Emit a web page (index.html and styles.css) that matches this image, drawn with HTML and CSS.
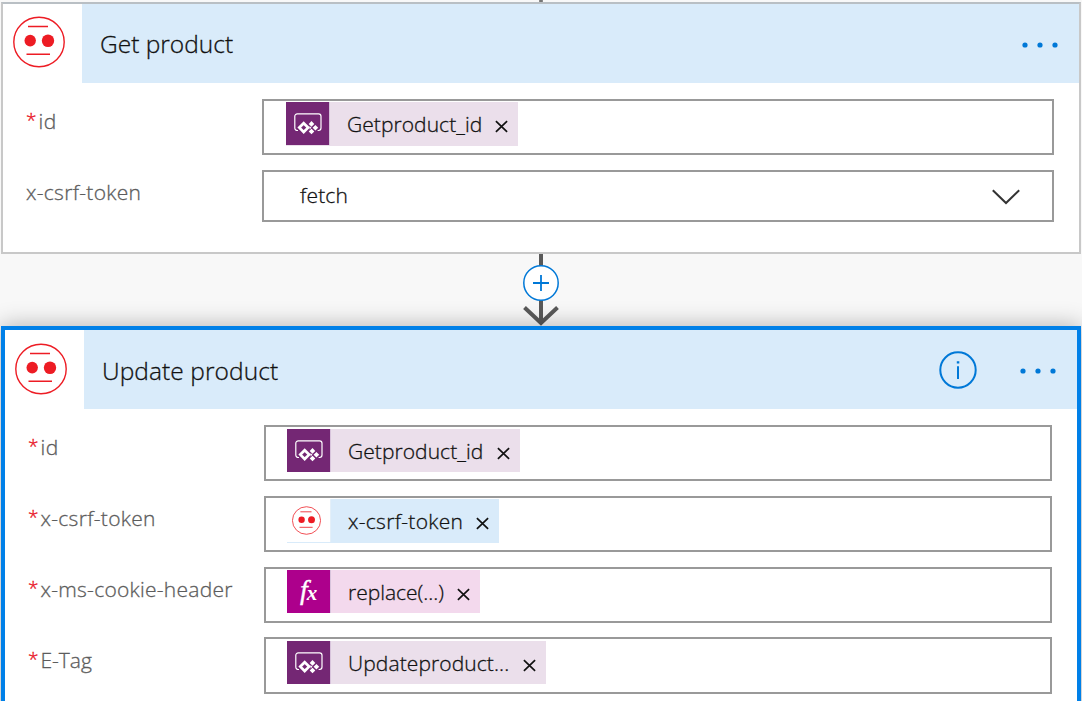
FILE: index.html
```html
<!DOCTYPE html>
<html lang="en">
<head>
<meta charset="utf-8">
<title>Flow designer</title>
<link rel="stylesheet" href="styles.css">
</head>
<body>
<svg class="defs" aria-hidden="true">
  <symbol id="face" viewBox="0 0 52 52">
    <ellipse cx="26" cy="26" rx="25.2" ry="24.7" fill="none" stroke="#ed1c24" stroke-width="1.4"/>
    <path d="M15 10.400h20M13.500 38.200h23.500" stroke="#ed1c24" stroke-width="1.500"/>
    <ellipse cx="17.2" cy="24.6" rx="5.7" ry="5.8" fill="#ed1c24"/>
    <ellipse cx="35" cy="24.8" rx="6.2" ry="6.3" fill="#ed1c24"/>
  </symbol>
  <symbol id="app" viewBox="0 0 43 43">
    <path d="M12 28.500h-.8a2.400 2.400 0 0 1-2.400-2.400V14.300a2.400 2.400 0 0 1 2.400-2.400h21.400a2.400 2.400 0 0 1 2.400 2.400v11.800a2.400 2.400 0 0 1-2.400 2.400h-1" fill="none" stroke="#fff" stroke-width="1.200"/>
    <path d="M17.700 21.200l4.400 4.400-4.400 4.400-4.400-4.400z" fill="none" stroke="#fff" stroke-width="2.700"/>
    <path d="M25.500 19.100l2.800 2.800-2.800 2.800-2.800-2.800zM29.400 22.900l2.800 2.800-2.800 2.800-2.800-2.800zM25.500 26.700l2.800 2.800-2.800 2.800-2.800-2.800zM23.600 23.900l1.800 1.800-1.800 1.800z" fill="#fff"/>
  </symbol>
  <symbol id="dots" viewBox="0 0 36 6">
    <circle cx="3" cy="3" r="2.6"/><circle cx="18" cy="3" r="2.6"/><circle cx="33" cy="3" r="2.6"/>
  </symbol>
  <symbol id="close" viewBox="0 0 13 13">
    <path d="M.9 1.2l11.2 10.6M12.1 1.2L.9 11.8" fill="none" stroke="#111" stroke-width="1.7"/>
  </symbol>
</svg>
<main class="canvas">
  <div class="incoming"></div>
  <section class="card">
    <header class="head">
      <div class="logo"><svg class="face"><use href="#face"/></svg></div>
      <h2 class="title title-get">Get product</h2>
      <svg class="dots"><use href="#dots"/></svg>
    </header>
    <div class="fields">
      <div class="row">
        <div class="label"><span class="req">*</span><span class="t-id">id</span></div>
        <div class="box">
          <div class="token app w-get"><span class="icon"><svg><use href="#app"/></svg></span><span class="name t-get">Getproduct_id</span><svg class="close"><use href="#close"/></svg></div>
        </div>
      </div>
      <div class="row">
        <div class="label"><span class="t-csrf">x-csrf-token</span></div>
        <div class="box select"><span class="t-fetch">fetch</span>
          <svg class="chevron" viewBox="0 0 28 16"><path d="M.8 1.2L14 14 27.2 1.2" fill="none" stroke="#333" stroke-width="2"/></svg>
        </div>
      </div>
    </div>
  </section>
  <div class="connector">
    <svg class="arrow" viewBox="0 0 40 72">
      <path d="M20 0v68M3.500 53.500L20 69 36.500 53.500" fill="none" stroke="#595959" stroke-width="4"/>
      <circle cx="20" cy="29" r="17.200" fill="#fff" stroke="#0078d7" stroke-width="1.500"/>
      <path d="M12 29h16M20 21v16" stroke="#0078d7" stroke-width="1.800"/>
    </svg>
  </div>
  <section class="card selected">
    <header class="head">
      <div class="logo"><svg class="face"><use href="#face"/></svg></div>
      <h2 class="title title-update">Update product</h2>
      <svg class="info" viewBox="0 0 38 38"><circle cx="19" cy="19" r="17.700" fill="none" stroke="#0078d7" stroke-width="2"/><path d="M17.800 10.300h2.500v2.300h-2.500zM18 15.300h2V28h-2z" fill="#0078d7"/></svg>
      <svg class="dots"><use href="#dots"/></svg>
    </header>
    <div class="fields">
      <div class="row">
        <div class="label"><span class="req">*</span><span class="t-id">id</span></div>
        <div class="box">
          <div class="token app w-get"><span class="icon"><svg><use href="#app"/></svg></span><span class="name t-get">Getproduct_id</span><svg class="close"><use href="#close"/></svg></div>
        </div>
      </div>
      <div class="row">
        <div class="label"><span class="req">*</span><span class="t-csrf">x-csrf-token</span></div>
        <div class="box high">
          <div class="token custom w-csrf"><span class="icon"><svg class="mini"><use href="#face"/></svg></span><span class="name t-csrf">x-csrf-token</span><svg class="close"><use href="#close"/></svg></div>
        </div>
      </div>
      <div class="row">
        <div class="label"><span class="req">*</span><span class="t-cookie">x-ms-cookie-header</span></div>
        <div class="box high">
          <div class="token expr w-replace"><span class="icon fx">f<span class="sub">x</span></span><span class="name t-replace">replace(...)</span><svg class="close"><use href="#close"/></svg></div>
        </div>
      </div>
      <div class="row">
        <div class="label"><span class="req">*</span><span class="t-etag">E-Tag</span></div>
        <div class="box last">
          <div class="token app w-update"><span class="icon"><svg><use href="#app"/></svg></span><span class="name t-update">Updateproduct...</span><svg class="close"><use href="#close"/></svg></div>
        </div>
      </div>
    </div>
  </section>
</main>
</body>
</html>
```
FILE: styles.css
```css
* { box-sizing: border-box; }
body { margin: 0; background: #f8f8f8; font-family: "Open Sans", "Noto Sans", sans-serif; font-size: 21px; font-weight: 300; color: #111; -webkit-text-stroke: .3px currentColor; }
svg { display: block; flex: none; }
.defs { position: absolute; width: 0; height: 0; }
.canvas { width: 1082px; height: 701px; overflow: hidden; padding: 0 1px; display: flex; flex-direction: column; }
.incoming { width: 4px; height: 2px; flex: none; margin-left: 538px; background: radial-gradient(#555, #aaa); }
.card { flex: none; width: 1080px; height: 252px; background: #fff; border: 2px solid #c8c8c8; border-top-color: #b9bfc4; }
.head { height: 79px; display: flex; align-items: center; background: #d9ebfa; padding-right: 21px; }
.logo { width: 79px; height: 79px; background: #fff; padding: 12px 0 0 10px; flex: none; }
.face { width: 52px; height: 52px; }
.title { flex: 1; margin: 0 0 0 18px; font-size: 24.500px; font-weight: 300; line-height: 34px; white-space: nowrap; }
.title-update { letter-spacing: .08px; }
.dots { width: 36px; height: 6px; fill: #0078d7; margin-top: 3px; }
.info { width: 38px; height: 38px; margin: 1px 43px 0 0; }
.fields { display: flex; flex-direction: column; gap: 15px; padding: 16px 25px 0 23px; }
.row { display: flex; align-items: flex-start; }
.label { width: 236px; flex: none; color: #5c5c5c; line-height: 30px; padding-top: 7px; white-space: nowrap; display: flex; }
.req { color: #e81123; width: 12.500px; font-size: 19px; line-height: 28px; }
.box { flex: 1; height: 56px; border: 2px solid #999; background: #fff; padding: 1px 0 0 22px; display: flex; }
.select { height: 52px; padding: 0 32px 0 36px; align-items: center; justify-content: space-between; }
.t-fetch { margin-top: -2px; letter-spacing: .15px; }
.chevron { width: 28px; height: 16px; margin-top: 1px; }
.token { height: 44px; display: flex; align-items: center; padding-right: 10px; }
.icon { width: 44px; height: 43px; flex: none; align-self: flex-start; border-right: 1px solid #d8c4dc; }
.icon svg { width: 43px; height: 43px; }
.name { flex: 1; margin-left: 17px; line-height: 30px; white-space: nowrap; }
.close { width: 13px; height: 13px; margin-top: 5px; }
.t-id { letter-spacing: .4px; }
.t-get { letter-spacing: .06px; }
.t-csrf { letter-spacing: .3px; }
.t-cookie { letter-spacing: .27px; }
.t-update { letter-spacing: .1px; }
.app { background: #ebdfeb; }
.app .icon { background: #742774; }
.custom { background: #d9ebfa; }
.custom .icon { background: #fff; border-color: #e4eff8; }
.icon .mini { width: 29px; height: 29px; margin: 7px 0 0 5px; }
.expr { background: #f3d9ed; height: 43px; }
.fx { background: #ad008c; color: #fff; font: italic 400 28px/40px "Liberation Serif", serif; -webkit-text-stroke: .4px #fff; display: flex; padding-left: 13px; }
.sub { font-size: 21px; font-weight: 700; line-height: 46px; margin-left: -1px; -webkit-text-stroke: 0; }
.w-get { width: 232px; }
.w-csrf { width: 212px; }
.w-replace { width: 193px; }
.w-update { width: 259px; }
.selected { height: 420px; border: 4px solid #0080e8; box-shadow: 0 0 22px rgba(0, 0, 0, .3); }
.selected .face.face { margin-top: 1px; }
.selected .icon .mini { margin-top: 7px; }
.selected .head { padding-right: 21px; }
.selected .title { padding-top: 2px; }
.selected .box { padding: 2px 0 0 21px; }
.selected .box.high { padding-top: 1px; }
.selected .box.last { height: 57px; margin-top: -1px; }
.selected .token.app { height: 43px; }
.selected .w-get { width: 233px; }
.connector { height: 72px; flex: none; display: flex; justify-content: center; }
.arrow { width: 40px; height: 72px; }
```
